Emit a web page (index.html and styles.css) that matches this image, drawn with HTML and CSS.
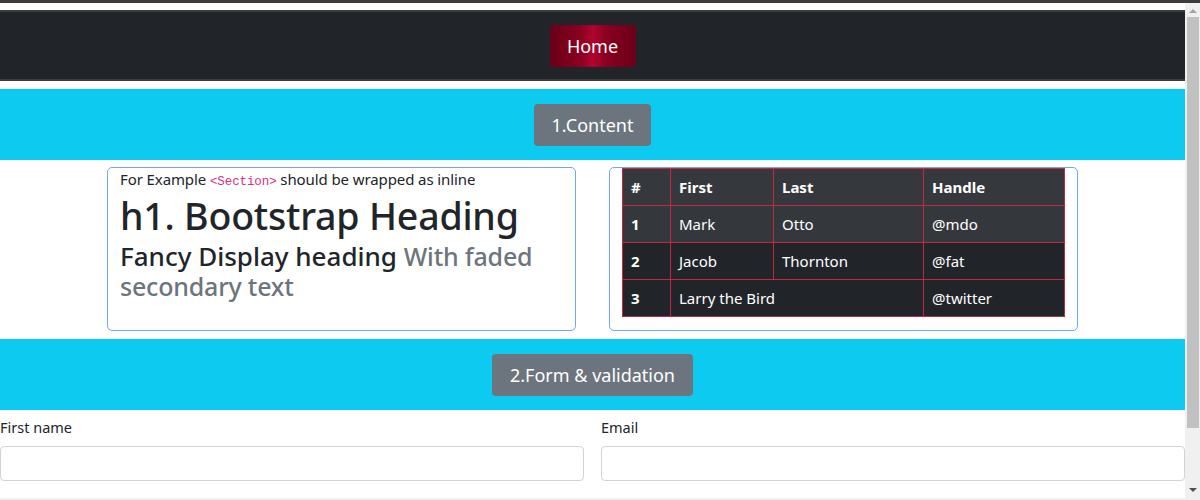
FILE: index.html
```html
<!DOCTYPE html>
<html lang="en">
<head>
<meta charset="utf-8">
<title>Bootstrap demo</title>
<link rel="stylesheet" href="styles.css">
</head>
<body>
<div class="topstrip"></div>
<div class="viewport">
  <main class="main">
    <nav class="navbar">
      <a class="home-btn" href="#">Home</a>
    </nav>
    <section class="band band-first">
      <span class="band-btn">1.Content</span>
    </section>
    <div class="cards">
      <div class="card">
        <p class="lead-line">For Example <code>&lt;Section&gt;</code> should be wrapped as inline</p>
        <h1 class="h1">h1. Bootstrap Heading</h1>
        <h3 class="fancy">Fancy Display heading <small class="muted">With faded secondary text</small></h3>
      </div>
      <div class="card">
        <table class="tbl">
          <thead>
            <tr><th class="c1">#</th><th class="c2">First</th><th class="c3">Last</th><th class="c4">Handle</th></tr>
          </thead>
          <tbody>
            <tr class="odd"><th>1</th><td>Mark</td><td>Otto</td><td>@mdo</td></tr>
            <tr class="even"><th>2</th><td>Jacob</td><td>Thornton</td><td>@fat</td></tr>
            <tr class="even"><th>3</th><td colspan="2">Larry the Bird</td><td>@twitter</td></tr>
          </tbody>
        </table>
      </div>
    </div>
    <section class="band">
      <span class="band-btn">2.Form &amp; validation</span>
    </section>
    <form class="form">
      <div class="field">
        <label class="lbl">First name</label>
        <input class="inp" type="text">
      </div>
      <div class="field">
        <label class="lbl">Email</label>
        <input class="inp" type="text">
      </div>
    </form>
  </main>
  <div class="vscroll">
    <span class="arrow-up"></span>
    <span class="thumb"></span>
    <span class="arrow-down"></span>
  </div>
</div>
<div class="hscroll"></div>
</body>
</html>
```
FILE: styles.css
```css
html, body {
  margin: 0;
  padding: 0;
}
body {
  font-family: "Noto Sans", "Open Sans", sans-serif;
  color: #212529;
  background: #fff;
  font-size: 15px;
  height: 500px;
  overflow: hidden;
}
.topstrip {
  height: 3px;
  background: #3c3c3c;
}
.viewport {
  display: flex;
  height: 495px;
}
.main {
  flex: 1;
  min-width: 0;
  overflow: hidden;
  padding-top: 7px;
}
.vscroll {
  width: 15px;
  background: #f0f0f0;
  display: flex;
  flex-direction: column;
  align-items: center;
}
.arrow-up {
  width: 0;
  height: 0;
  border-left: 4px solid transparent;
  border-right: 4px solid transparent;
  border-bottom: 4px solid #a3a3a3;
  margin-top: 6px;
}
.thumb {
  width: 12px;
  height: 411px;
  background: #c1c1c1;
  margin-top: 4px;
}
.arrow-down {
  width: 0;
  height: 0;
  border-left: 4px solid transparent;
  border-right: 4px solid transparent;
  border-top: 4px solid #505050;
  margin-top: auto;
  margin-bottom: 6px;
}
.hscroll {
  height: 2px;
  background: #f0f0f0;
}
.navbar {
  background: #212529;
  border-top: 2px solid #3a3d40;
  border-bottom: 2px solid #3a3d40;
  height: 67px;
  display: flex;
  align-items: center;
  justify-content: center;
}
.home-btn {
  display: block;
  width: 86px;
  height: 42px;
  line-height: 42px;
  text-align: center;
  color: #fff;
  font-size: 18px;
  text-decoration: none;
  border-radius: 4px;
  background: linear-gradient(90deg, #690017 0%, #8a0020 35%, #b0052f 50%, #8a0020 65%, #690017 100%);
}
.band {
  background: #0dcaf0;
  height: 71px;
  display: flex;
  align-items: center;
  justify-content: center;
}
.band-first {
  margin-top: 8px;
}
.band-btn {
  display: inline-block;
  background: #6c757d;
  color: #fff;
  font-size: 18px;
  line-height: 42px;
  height: 42px;
  padding: 0 18px;
  border-radius: 4px;
}
.cards {
  display: flex;
  justify-content: center;
  gap: 33px;
  padding: 7px 0 8px;
}
.card {
  width: 443px;
  height: 162px;
  border: 1px solid #6ea8fe;
  border-radius: 5px;
  padding: 0 12px;
}
.lead-line {
  margin: 0;
  font-size: 15px;
  line-height: 22px;
  letter-spacing: -0.1px;
}
code {
  font-family: "Liberation Mono", "DejaVu Sans Mono", monospace;
  color: #d63384;
  font-size: 12.5px;
}
.h1 {
  margin: 0;
  font-size: 37.5px;
  font-weight: 500;
  line-height: 46px;
  letter-spacing: -0.2px;
}
.fancy {
  margin: 2px 0 0;
  font-size: 26px;
  font-weight: 500;
  line-height: 30px;
}
.muted {
  color: #6c757d;
  font-size: 25px;
  letter-spacing: -0.2px;
}
.tbl {
  border-collapse: collapse;
  width: 443px;
  color: #fff;
  font-size: 15px;
}
.tbl th, .tbl td {
  border: 1px solid #c2283f;
  padding: 0 8px;
  height: 36px;
  text-align: left;
}
.tbl th {
  font-weight: 700;
}
.tbl td {
  font-weight: 400;
}
.tbl thead tr {
  background: #35393d;
}
.tbl tr.odd {
  background: #34383c;
}
.tbl tr.even {
  background: #212529;
}
.c1 { width: 31px; }
.c2 { width: 86px; }
.c3 { width: 133px; }
.form {
  display: grid;
  grid-template-columns: 1fr 1fr;
  column-gap: 17px;
  row-gap: 16px;
  padding-top: 6px;
}
.field {
  display: flex;
  flex-direction: column;
}
.lbl {
  font-size: 14.5px;
  line-height: 22px;
  margin-bottom: 8px;
}
.inp {
  height: 35px;
  border: 1px solid #ced4da;
  border-radius: 4px;
  box-sizing: border-box;
  font-size: 15px;
}
```
